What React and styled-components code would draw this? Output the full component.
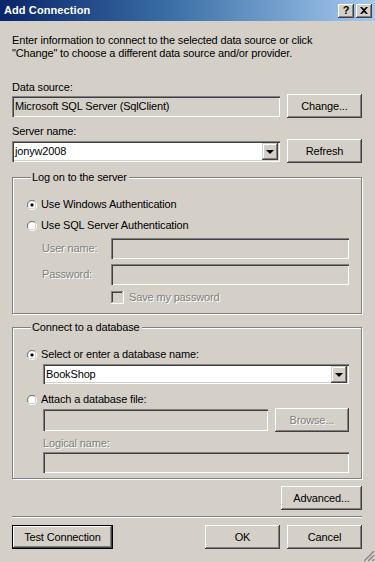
import React from 'react'
import styled, { createGlobalStyle, css } from 'styled-components'

const Global = createGlobalStyle`
  html, body {
    margin: 0;
    padding: 0;
    background: #d4d0c8;
  }
  * { box-sizing: border-box; }
`

const font = css`
  font-family: 'Liberation Sans', Arial, sans-serif;
  font-size: 11px;
  line-height: 13px;
  letter-spacing: -0.15px;
`

// Window chrome
const Window = styled.div`
  ${font}
  width: 375px;
  height: 562px;
  background: #d4d0c8;
  color: #000;
  display: flex;
  flex-direction: column;
  overflow: hidden;
`

const TitleBar = styled.div`
  height: 21px;
  display: flex;
  align-items: center;
  padding: 0 3px 0 4px;
  background: linear-gradient(to right, #0a246a 0%, #3a6ea5 45%, #a6caf0 100%);
`

const Title = styled.div`
  flex: 1;
  color: #fff;
  font-weight: bold;
  font-size: 11px;
  letter-spacing: 0.1px;
`

const CaptionButtons = styled.div`
  display: flex;
  gap: 2px;
`

const CaptionButton = styled.div`
  width: 16px;
  height: 14px;
  background: #d4d0c8;
  box-shadow: inset -1px -1px #404040, inset 1px 1px #fff, inset -2px -2px #808080;
  display: flex;
  align-items: center;
  justify-content: center;
  font-weight: bold;
  font-size: 11px;
  line-height: 1;
  color: #000;
`

const Body = styled.div`
  flex: 1;
  display: flex;
  flex-direction: column;
  padding: 13px 13px 0 12px;
  position: relative;
`

const Intro = styled.p`
  margin: 0;
  width: 330px;
`

const Label = styled.div`
  height: 13px;
  width: ${p => (p.$w ? `${p.$w}px` : 'auto')};
  margin-top: ${p => p.$mt || 0}px;
  color: ${p => (p.$disabled ? '#808080' : '#000')};
  ${p => p.$disabled && 'text-shadow: 1px 1px #fff;'}
`

const Row = styled.div`
  display: flex;
  align-items: center;
  gap: ${p => p.$gap ?? 7}px;
  margin-top: ${p => p.$mt || 0}px;
  padding-left: ${p => p.$indent || 0}px;
`

const sunken = css`
  box-shadow: inset 1px 1px #808080, inset 2px 2px #404040, inset -1px -1px #fff, inset -2px -2px #d4d0c8;
`

const TextBox = styled.div`
  ${sunken}
  width: ${p => p.$w}px;
  height: ${p => p.$h || 21}px;
  background: ${p => (p.$white ? '#fff' : '#d4d0c8')};
  padding: 0 3px;
  display: flex;
  align-items: center;
  white-space: nowrap;
  overflow: hidden;
`

const Combo = styled(TextBox)`
  background: #fff;
  padding: 0 2px 0 3px;
  justify-content: space-between;
`

const DropButton = styled.div`
  width: 16px;
  height: 17px;
  background: #d4d0c8;
  box-shadow: inset -1px -1px #404040, inset 1px 1px #d4d0c8, inset -2px -2px #808080, inset 2px 2px #fff;
  display: flex;
  align-items: center;
  justify-content: center;

  &::after {
    content: '';
    border-left: 4px solid transparent;
    border-right: 4px solid transparent;
    border-top: 4px solid #000;
    margin-top: 1px;
  }
`

const Button = styled.div`
  width: ${p => p.$w || 75}px;
  height: ${p => p.$h || 23}px;
  background: #d4d0c8;
  box-shadow: inset -1px -1px #404040, inset 1px 1px #fff, inset -2px -2px #808080, inset 2px 2px #d4d0c8;
  display: flex;
  align-items: center;
  justify-content: center;
  white-space: nowrap;
  color: ${p => (p.$disabled ? '#808080' : '#000')};
  ${p => p.$disabled && 'text-shadow: 1px 1px #fff;'}
  ${p =>
    p.$default &&
    css`
      border: 1px solid #000;
      box-shadow: inset -1px -1px #404040, inset 1px 1px #fff, inset -2px -2px #808080;
    `}
`

const Group = styled.fieldset`
  margin: ${p => p.$mt || 0}px 0 0 0;
  padding: 0 12px 0 13px;
  min-width: 0;
  height: ${p => p.$h}px;
  border: 1px solid #808080;
  box-shadow: inset 1px 1px #fff, 1px 1px #fff;
  display: flex;
  flex-direction: column;

  legend {
    padding: 0 2px 0 1px;
    margin-left: 5px;
    background: #d4d0c8;
    line-height: 13px;
  }
`

const Option = styled.div`
  display: flex;
  align-items: center;
  gap: 3px;
  height: 13px;
  margin-top: ${p => p.$mt || 0}px;
`

const Separator = styled.div`
  height: 2px;
  margin-top: 6px;
  border-top: 1px solid #808080;
  border-bottom: 1px solid #fff;
`

const Footer = styled.div`
  display: flex;
  align-items: center;
  margin-top: 7px;
  gap: 7px;
`

const Spacer = styled.div`
  flex: 1;
`

const Grip = styled.svg`
  position: absolute;
  right: 0;
  bottom: 0;
`

function Radio({ checked }) {
  return (
    <svg width="12" height="12" viewBox="0 0 12 12">
      <path d="M1 8 V4 L4 1 H8 L9 2 H4 L2 4 V8 Z" fill="#808080" />
      <path d="M2 8 V4 L4 2 H8 L9 3 H4 L3 4 V8 Z" fill="#404040" />
      <circle cx="6" cy="6" r="4" fill="#fff" />
      <path d="M10 4 V8 L8 10 H4 L3 11 H8 L11 8 V4 Z" fill="#fff" />
      <path d="M9 4 V8 L8 9 H4 L3 10 H8 L10 8 V4 Z" fill="#d4d0c8" />
      {checked && <rect x="4.5" y="4.5" width="3" height="3" rx="1" fill="#000" />}
    </svg>
  )
}

function Checkbox() {
  return (
    <svg width="13" height="13" viewBox="0 0 13 13">
      <rect x="0" y="0" width="13" height="13" fill="#fff" />
      <rect x="0" y="0" width="12" height="12" fill="#808080" />
      <rect x="1" y="1" width="11" height="11" fill="#d4d0c8" />
      <rect x="1" y="1" width="10" height="10" fill="#404040" />
      <rect x="2" y="2" width="9" height="9" fill="#d4d0c8" />
    </svg>
  )
}

export default function App() {
  return (
    <Window>
      <Global />
      <TitleBar>
        <Title>Add Connection</Title>
        <CaptionButtons>
          <CaptionButton>?</CaptionButton>
          <CaptionButton>
            <svg width="8" height="7" viewBox="0 0 8 7">
              <path d="M0 0 H2 L4 2 L6 0 H8 L5 3.5 L8 7 H6 L4 5 L2 7 H0 L3 3.5 Z" fill="#000" />
            </svg>
          </CaptionButton>
        </CaptionButtons>
      </TitleBar>

      <Body>
        <Intro>
          Enter information to connect to the selected data source or click "Change" to choose a
          different data source and/or provider.
        </Intro>

        <Label $mt={21}>Data source:</Label>
        <Row>
          <TextBox $w={268}>Microsoft SQL Server (SqlClient)</TextBox>
          <Button $w={75} $h={24}>Change...</Button>
        </Row>

        <Label $mt={7}>Server name:</Label>
        <Row $mt={1}>
          <Combo $w={268} $h={21}>
            <span>jonyw2008</span>
            <DropButton />
          </Combo>
          <Button $w={75} $h={24}>Refresh</Button>
        </Row>

        <Group $mt={8} $h={143}>
          <legend>Log on to the server</legend>
          <Option $mt={14}>
            <Radio checked />
            <span>Use Windows Authentication</span>
          </Option>
          <Option $mt={8}>
            <Radio />
            <span>Use SQL Server Authentication</span>
          </Option>
          <Row $mt={6} $indent={16} $gap={0}>
            <Label $disabled $w={69}>User name:</Label>
            <TextBox $w={239} $h={21} />
          </Row>
          <Row $mt={5} $indent={16} $gap={0}>
            <Label $disabled $w={69}>Password:</Label>
            <TextBox $w={239} $h={21} />
          </Row>
          <Row $mt={6} $indent={85} $gap={5}>
            <Checkbox />
            <Label $disabled>Save my password</Label>
          </Row>
        </Group>

        <Group $mt={7} $h={158}>
          <legend>Connect to a database</legend>
          <Option $mt={14}>
            <Radio checked />
            <span>Select or enter a database name:</span>
          </Option>
          <Row $mt={3} $indent={17}>
            <Combo $w={307} $h={20}>
              <span>BookShop</span>
              <DropButton />
            </Combo>
          </Row>
          <Option $mt={9}>
            <Radio />
            <span>Attach a database file:</span>
          </Option>
          <Row $mt={2} $indent={17}>
            <TextBox $w={226} $h={22} />
            <Button $w={75} $h={24} $disabled>Browse...</Button>
          </Row>
          <Row $mt={5} $indent={17}>
            <Label $disabled>Logical name:</Label>
          </Row>
          <Row $mt={2} $indent={17}>
            <TextBox $w={307} $h={21} />
          </Row>
        </Group>

        <Row $mt={7}>
          <Spacer />
          <Button $w={81} $h={24}>Advanced...</Button>
        </Row>

        <Separator />

        <Footer>
          <Button $w={101} $h={24} $default>Test Connection</Button>
          <Spacer />
          <Button $w={75} $h={24}>OK</Button>
          <Button $w={75} $h={24}>Cancel</Button>
        </Footer>

        <Grip width="13" height="13" viewBox="0 0 13 13">
          <path d="M12 1 L1 12 M12 5 L5 12 M12 9 L9 12" stroke="#fff" strokeWidth="1" />
          <path d="M12 2 L2 12 M12 6 L6 12 M12 10 L10 12" stroke="#808080" strokeWidth="1.5" />
        </Grip>
      </Body>
    </Window>
  )
}
